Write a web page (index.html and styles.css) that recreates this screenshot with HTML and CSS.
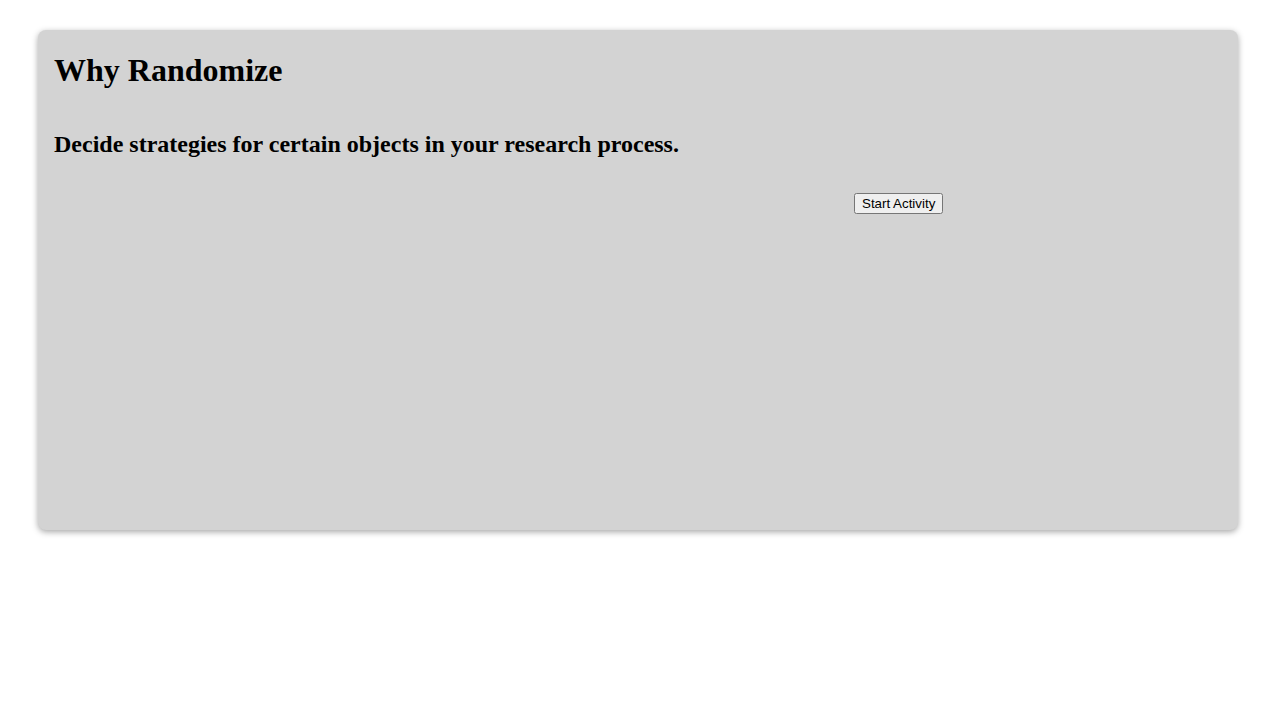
FILE: index.html
```html
<!DOCTYPE html>
<html>
<head>
<meta charset="utf-8">
<link rel="stylesheet" href="styles.css">
</head>
<body>
<div class="card">
  <h1 class="title">Why Randomize</h1>
  <h2 class="subtitle">Decide strategies for certain objects in your research process.</h2>
  <div class="actions">
    <button class="start">Start Activity</button>
  </div>
</div>
</body>
</html>
```

FILE: styles.css
```css
html, body {
  margin: 0;
  background: #ffffff;
}
body {
  font-family: "Liberation Serif", "Times New Roman", serif;
  padding: 30px 0;
}
.card {
  width: 1200px;
  height: 500px;
  box-sizing: border-box;
  margin: 0 0 0 38px;
  padding: 22px 16px 16px 16px;
  background: #d3d3d3;
  border-radius: 8px;
  box-shadow: 0 2px 6px rgba(0, 0, 0, 0.35);
  display: flex;
  flex-direction: column;
}
.title {
  font-size: 32px;
  font-weight: bold;
  margin: 0 0 21px 0;
}
.subtitle {
  font-size: 24px;
  font-weight: bold;
  margin: 21px 0 20px 0;
}
.actions {
  padding-top: 15px;
  padding-left: 800px;
}
.start {
  font-family: "Liberation Sans", Arial, sans-serif;
  font-size: 13.33px;
}
```
